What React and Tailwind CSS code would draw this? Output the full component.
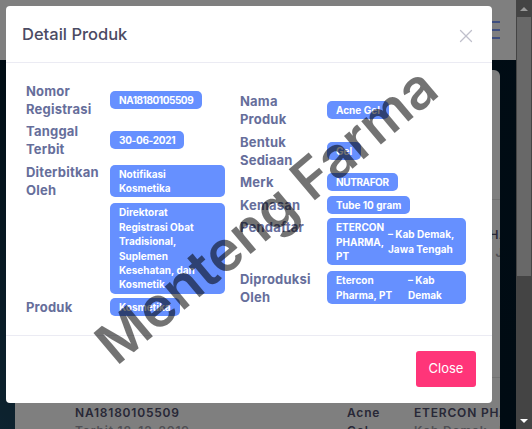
import { X } from "lucide-react";

const leftRows = [
  { label: "Nomor Registrasi", value: "NA18180105509", fit: "tracking-[-0.45px]" },
  { label: "Tanggal Terbit", value: "30-06-2021", fit: "tracking-[-0.3px]" },
  { label: "Diterbitkan Oleh", value: "Notifikasi Kosmetika" },
  { label: "", value: "Direktorat Registrasi Obat Tradisional, Suplemen Kesehatan, dan Kosmetik" },
  { label: "Produk", value: "Kosmetika" },
];

function Badge({ children, className = "" }) {
  return (
    <span className={`inline-block w-fit rounded-[5px] bg-[#6690ff] px-[9px] py-[1.8px] text-[10px] leading-[14.4px] font-bold text-white ${className}`}>
      {children}
    </span>
  );
}

function Label({ children, className = "" }) {
  return (
    <div className={`max-w-[76px] text-[13px] leading-[18px] font-bold tracking-[0.2px] text-[#666e9b] ${className}`}>
      {children}
    </div>
  );
}

function TableRow({ no, name, maker, place }) {
  return (
    <div className="flex h-[178px] border-t border-[#e4e4e4] pt-[26px] pl-[60px] text-[12px] leading-[18px] font-semibold tracking-[0.8px] text-[#50506e]">
      <div className="w-[272px] shrink-0">
        {no}
        <div className="text-[#a0a0a8]">Terbit 18-12-2019</div>
      </div>
      <div className="mr-[27px] w-[40px] shrink-0">{name}</div>
      <div className="whitespace-nowrap">
        {maker}
        <div className="text-[#a0a0a8]">{place}</div>
      </div>
    </div>
  );
}

export default function App() {
  return (
    <div className="relative flex h-screen overflow-hidden font-['Inter',sans-serif]">
      {/* page behind the dialog */}
      <div className="relative min-w-0 flex-1 bg-[linear-gradient(to_top_right,#1c4760,#001726_45%,#00182a)]">
        <div className="flex h-[60px] justify-end bg-white pt-[21px] pr-[16px]">
          <div className="flex w-[24px] flex-col gap-[6px]">
            <div className="h-[2px] bg-[#7d9dff]" />
            <div className="h-[2px] bg-[#7d9dff]" />
            <div className="h-[2px] bg-[#7d9dff]" />
          </div>
        </div>
        <div className="mt-[10px] ml-[15px] w-[485px] overflow-hidden rounded-t-[6px] bg-white pt-[129px]">
          <TableRow no="NA18180105509" name="Acne Gel" maker="ETERCON PHARMA" place="Kab Demak, Jawa" />
          <TableRow no="NA18180105509" name="Acne Gel" maker="ETERCON PHARMA" place="Kab Demak, Jawa" />
        </div>
        <div className="absolute inset-0 bg-black/50" />
      </div>

      {/* scrollbar */}
      <div className="flex w-[16px] flex-col bg-[#444444]">
        <div className="flex h-[17px] items-center justify-center">
          <div className="h-0 w-0 border-x-[4px] border-b-[4px] border-x-transparent border-b-[#9a9a9a]" />
        </div>
        <div className="mx-[1px] h-[259px] bg-[#686868]" />
        <div className="flex-1" />
        <div className="flex h-[17px] items-center justify-center">
          <div className="h-0 w-0 border-x-[4px] border-t-[4px] border-x-transparent border-t-white" />
        </div>
      </div>

      {/* dialog */}
      <div className="absolute top-[6px] left-[6px] flex h-[397px] w-[486px] flex-col rounded-[4px] bg-white">
        <div className="flex h-[57px] items-center justify-between border-b border-[#ebebf3] pr-[15px] pl-[16px]">
          <h5 className="text-[16.5px] font-medium text-[#4b4b63]">Detail Produk</h5>
          <X size={22} strokeWidth={1.4} className="mt-[4px] text-[#c0c0cc]" />
        </div>

        <div className="flex flex-1 items-center pl-[20px]">
          <div className="grid w-[199px] grid-cols-[84px_115px] items-center gap-y-[4.5px]">
            {leftRows.map((row) => (
              <div key={row.value} className="contents">
                <Label>{row.label}</Label>
                <Badge className={row.fit}>{row.value}</Badge>
              </div>
            ))}
          </div>

          <div className="ml-[15px] grid w-[226px] grid-cols-[87px_139px] items-center gap-y-[4.5px]">
            <Label>Nama Produk</Label>
            <Badge>Acne Gel</Badge>
            <Label>Bentuk Sediaan</Label>
            <Badge>Gel</Badge>
            <Label>Merk</Label>
            <Badge className="tracking-[-0.4px]">NUTRAFOR</Badge>
            <Label>Kemasan</Label>
            <Badge>Tube 10 gram</Badge>
            <Label className="self-start">Pendaftar</Label>
            <Badge>
              <span className="flex items-center">
                <span className="w-[52px] shrink-0">ETERCON PHARMA, PT</span>
                <span>– Kab Demak, Jawa Tengah</span>
              </span>
            </Badge>
            <Label>Diproduksi Oleh</Label>
            <Badge>
              <span className="flex items-center">
                <span className="w-[72px] shrink-0">Etercon Pharma, PT</span>
                <span>– Kab Demak</span>
              </span>
            </Badge>
          </div>
        </div>

        <div className="flex justify-end border-t border-[#ebebf3] pt-[15px] pr-[16px] pb-[16px]">
          <button className="h-[36px] w-[60px] rounded-[3px] bg-[#ff3579] text-[13px] text-white">Close</button>
        </div>
      </div>

      {/* watermark */}
      <div className="pointer-events-none absolute inset-0 flex items-center justify-center">
        <div className="-rotate-[40deg] text-[56px] leading-none font-semibold whitespace-nowrap text-black/55">
          Menteng Farma
        </div>
      </div>
    </div>
  );
}
